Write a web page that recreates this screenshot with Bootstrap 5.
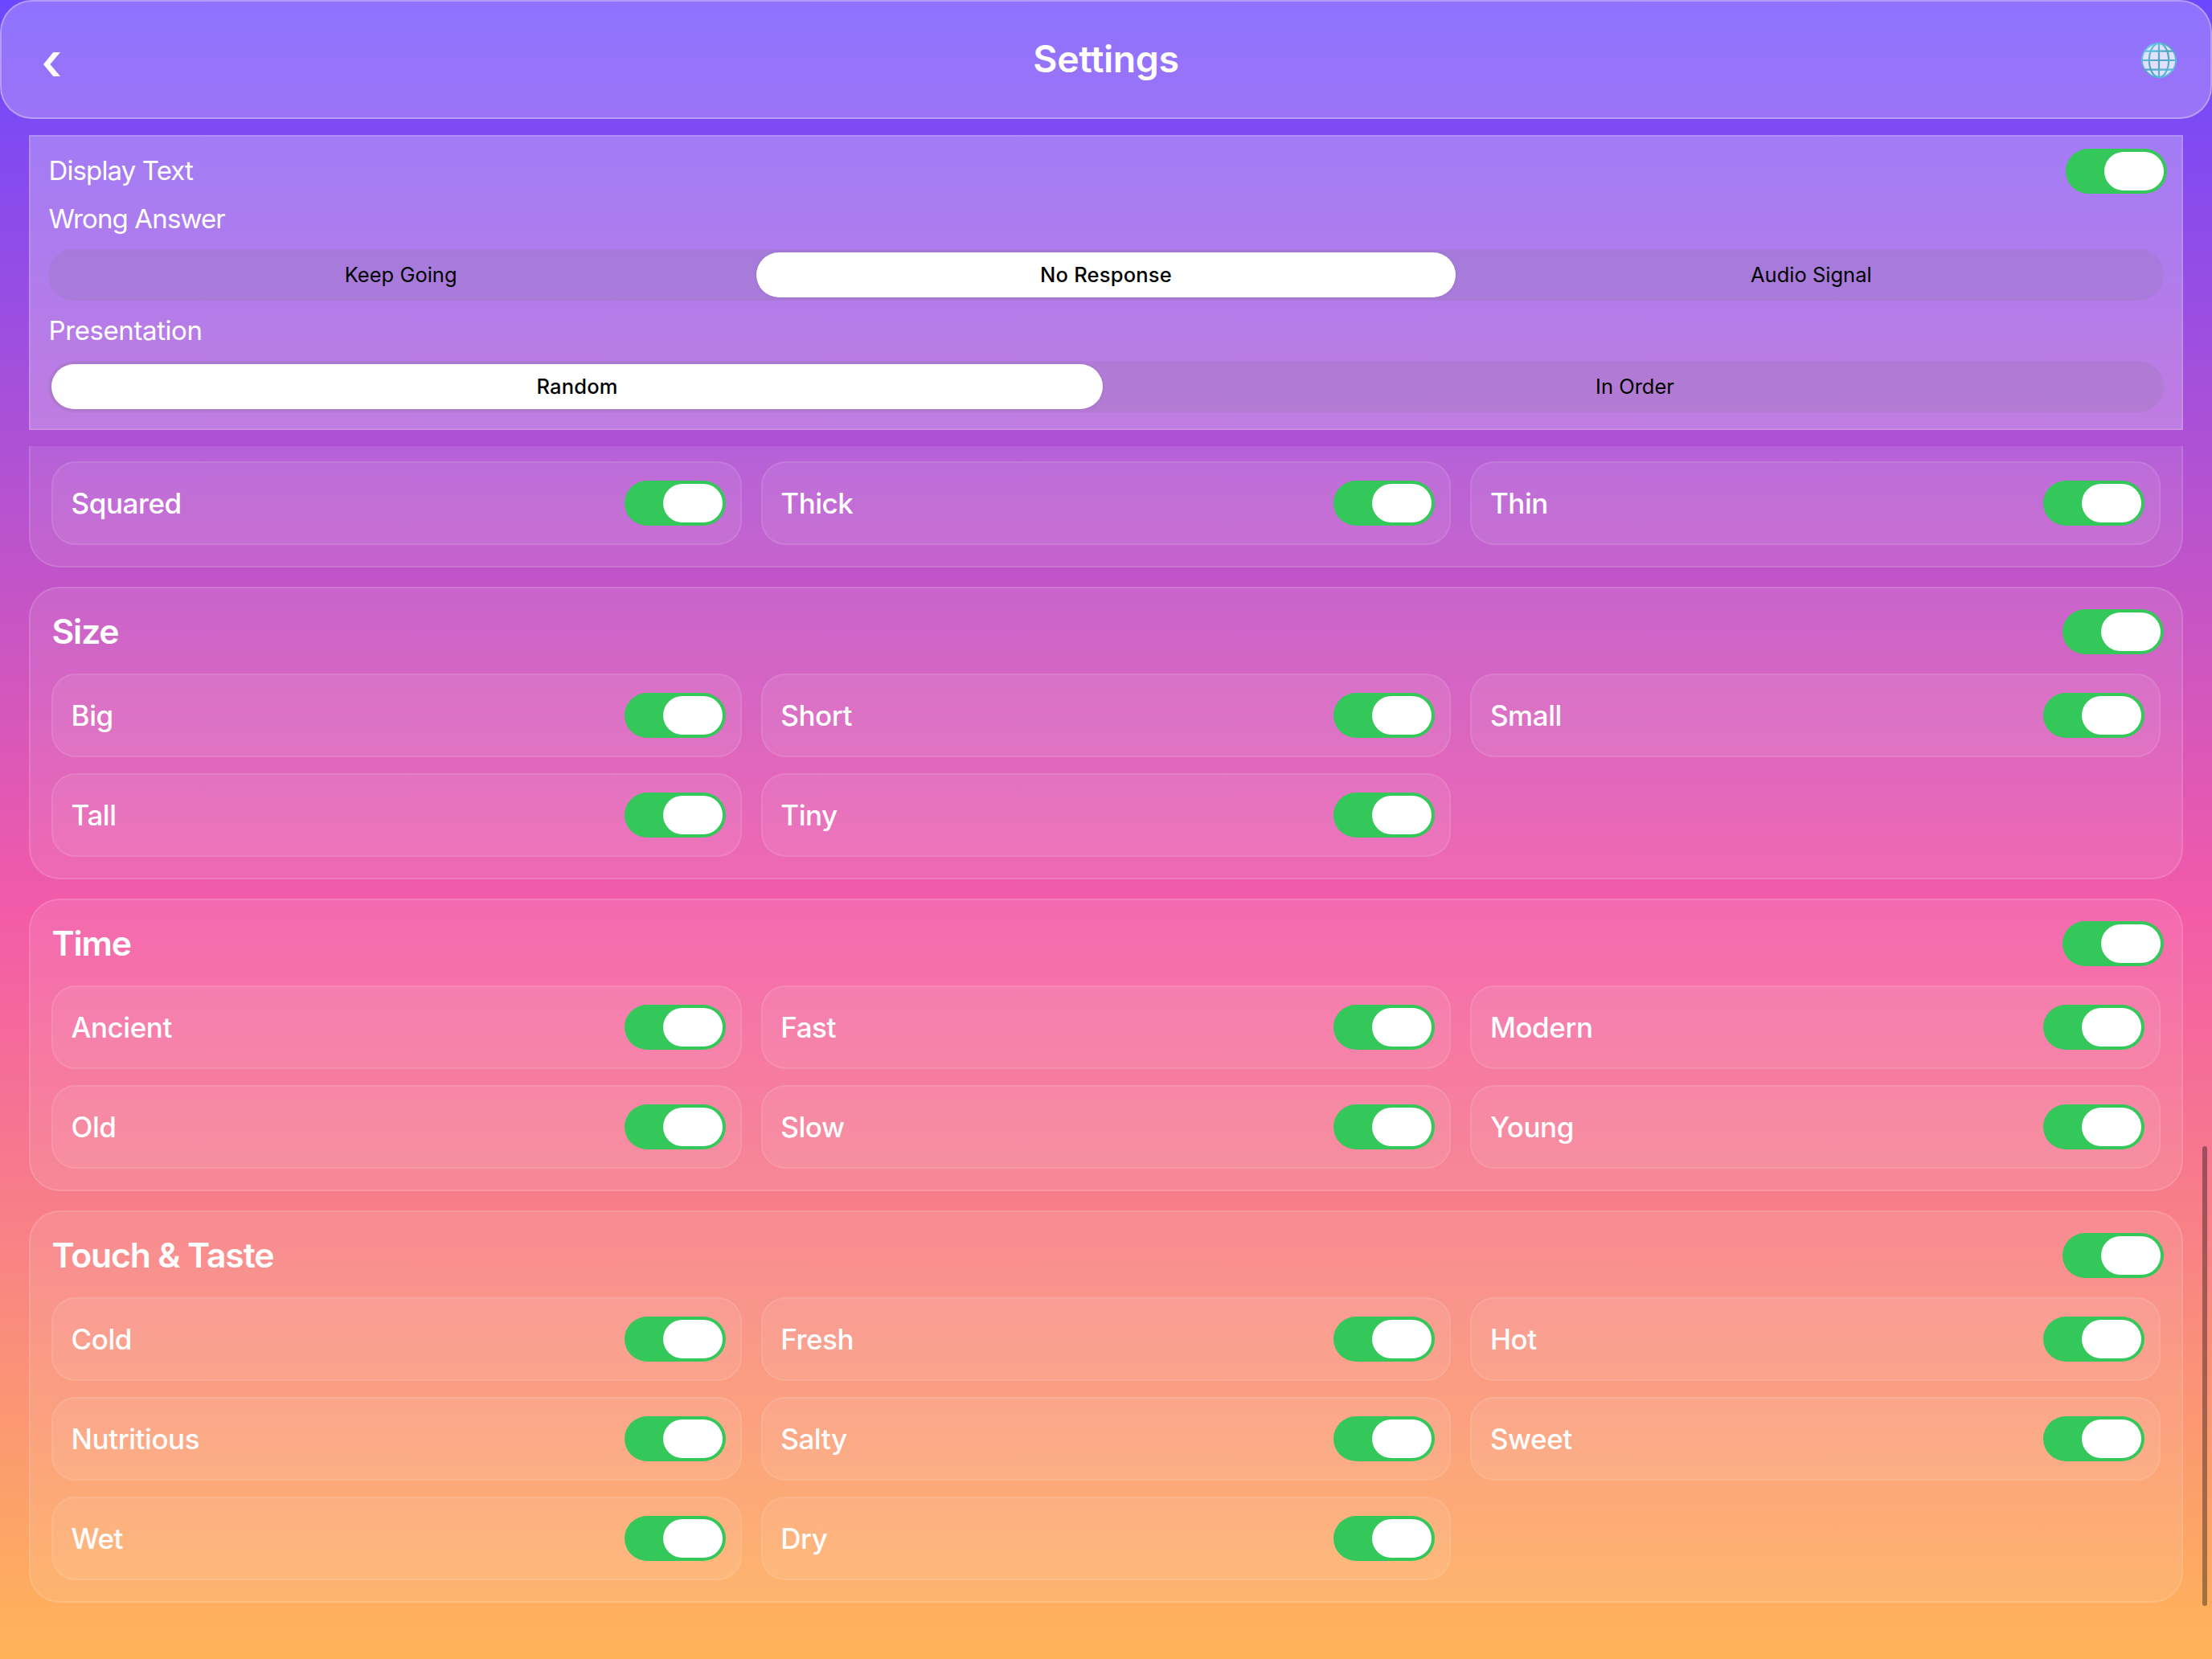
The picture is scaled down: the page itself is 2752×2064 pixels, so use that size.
<!DOCTYPE html>
<html lang="en">
<head>
<meta charset="utf-8">
<title>Settings</title>
<link rel="stylesheet" href="https://cdn.jsdelivr.net/npm/bootstrap@5.3.0/dist/css/bootstrap.min.css">
<style>
html,body{height:100%}
body{font-family:Inter,"Liberation Sans",sans-serif;color:#fff;overflow:hidden;height:2064px;
background:linear-gradient(180deg,#6c47ff 0,#f35ba8 55%,#ffb459 100%);line-height:1}
.topbar{height:148px;border:2px solid rgba(255,255,255,.3);border-radius:40px;background:rgba(255,255,255,.235);padding:0 41px 0 52px}
.topbar h1{font-size:46.5px;font-weight:600;letter-spacing:-.37px}
.back-ico{width:21px;height:30px;margin-top:12px}
.globe-ico{width:46px;height:46px;margin-top:2px}
.side{margin:0 36px}
.prefs{margin-top:20px;height:367px;border:2px solid rgba(255,255,255,.14);background:linear-gradient(rgba(255,255,255,.275),rgba(255,255,255,.25)) border-box;padding:15px 22px 20px}
.prefs .lbl{font-size:33px;font-weight:400;line-height:41px;letter-spacing:-.87px;padding-left:.5px}
.prefs .lbl.lbl-next{margin-top:17px;letter-spacing:-.4px}
.prefs .gap-a{margin-top:11px}
.row-top{height:56px;margin-right:-4px}
.prefs .row-top .lbl{padding-bottom:2px}
.segs{height:64px;border-radius:32px;margin-top:17px;background:rgba(118,118,128,.15);color:#000;font-size:25.5px;font-weight:400}
.segs>div{flex:1 1 0;padding:4px}
.segs span{height:56px;border-radius:28px}
.segs .on{background:#fff;box-shadow:0 0 4px rgba(0,0,0,.1);font-weight:500;letter-spacing:.2px}
.stack{margin-top:20px;gap:24px}
.grp{border:2px solid rgba(255,255,255,.13);border-radius:38px;background:rgba(255,255,255,.095);padding:26px}
.grp.cut{border-top:0;border-top-left-radius:0;border-top-right-radius:0;padding-top:19px}
.grp-head{height:56px;margin:0 -4px 24px 0}
.grp-head h2{font-size:42.7px;font-weight:600;letter-spacing:-1.15px;padding-left:.5px}
.tiles{display:grid;grid-template-columns:repeat(3,1fr);gap:20px 24px}
.tile{height:104px;border:2px solid rgba(255,255,255,.09);border-radius:30px;background:rgba(255,255,255,.08);padding:0 18px 0 22.6px;font-size:35px;font-weight:500;letter-spacing:-.45px}
.form-check-input.tg{width:126px;height:56px;margin:0;border:0;border-radius:28px;background:#34c759;flex:none}
.tg::before{content:"";display:block;width:74px;height:48px;border-radius:24px;background:#fff;margin-left:48px;transform:translateY(4px)}
.thumb{position:absolute;right:6px;top:1426px;width:6px;height:572px;border-radius:3px;background:rgba(0,0,0,.35)}
</style>
</head>
<body class="position-relative">
<header class="topbar d-flex align-items-center justify-content-between position-relative">
<svg class="back-ico" viewBox="0 0 21 30"><path d="M12.300 0H21L8.400 15 21 30h-8.700L0 15z" fill="#fff"/></svg>
<h1 class="m-0 position-absolute start-50 translate-middle-x">Settings</h1>
<svg class="globe-ico" viewBox="0 0 46 46" fill="none">
<defs><linearGradient id="gl" gradientUnits="userSpaceOnUse" x1="4" y1="4" x2="42" y2="42"><stop offset="0" stop-color="#66d0ee"/><stop offset=".5" stop-color="#4fa3c4"/><stop offset="1" stop-color="#5cc3e2"/></linearGradient></defs>
<circle cx="23" cy="23" r="21.500" fill="#e2e0fb"/>
<g stroke="url(#gl)" stroke-width="2.200"><circle cx="23" cy="23" r="21" stroke-width="1.800"/><ellipse cx="23" cy="23" rx="12.200" ry="21"/><path d="M23 2v42M2 23h42M5.500 11.600h35M5.500 34.600h35"/></g></svg>
</header>
<section class="prefs side">
<div class="row-top d-flex align-items-center justify-content-between"><div class="lbl">Display Text</div><input class="form-check-input tg" type="checkbox" role="switch" checked></div>
<div class="lbl gap-a">Wrong Answer</div>
<div class="segs d-flex"><div><span class="d-flex align-items-center justify-content-center">Keep Going</span></div><div><span class="on d-flex align-items-center justify-content-center">No Response</span></div><div><span class="d-flex align-items-center justify-content-center">Audio Signal</span></div></div>
<div class="lbl lbl-next">Presentation</div>
<div class="segs d-flex"><div><span class="on d-flex align-items-center justify-content-center">Random</span></div><div><span class="d-flex align-items-center justify-content-center">In Order</span></div></div>
</section>
<main class="stack side d-flex flex-column" id="stack"></main>
<div class="thumb"></div>
<script>
const sw='<input class="form-check-input tg" type="checkbox" role="switch" checked>';
const groups=[
  [null,['Squared','Thick','Thin']],
  ['Size',['Big','Short','Small','Tall','Tiny']],
  ['Time',['Ancient','Fast','Modern','Old','Slow','Young']],
  ['Touch &amp; Taste',['Cold','Fresh','Hot','Nutritious','Salty','Sweet','Wet','Dry']]
];
const row='d-flex align-items-center justify-content-between';
document.getElementById('stack').innerHTML=groups.map(([t,items])=>`<section class="grp${t?'':' cut'}">${t?`<div class="grp-head ${row}"><h2 class="m-0">${t}</h2>${sw}</div>`:''}<div class="tiles">${items.map(i=>`<div class="tile ${row}"><span>${i}</span>${sw}</div>`).join('')}</div></section>`).join('');
</script>
<script src="https://cdn.jsdelivr.net/npm/bootstrap@5.3.0/dist/js/bootstrap.bundle.min.js"></script>
</body>
</html>
